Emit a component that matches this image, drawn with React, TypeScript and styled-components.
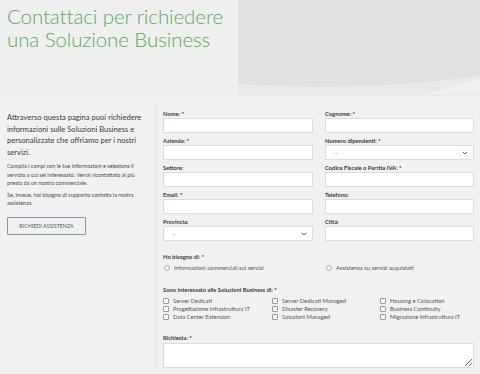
import styled, { createGlobalStyle } from "styled-components";
import { ChevronDown } from "lucide-react";

const GlobalStyle = createGlobalStyle`
  body {
    margin: 0;
    background: #f1f1f1;
    font-family: Lato, "Open Sans", sans-serif;
    color: #333;
  }
`;

const services = [
  "Server Dedicati",
  "Server Dedicati Managed",
  "Housing e Colocation",
  "Progettazione Infrastruttura IT",
  "Disaster Recovery",
  "Business Continuity",
  "Data Center Extension",
  "Soluzioni Managed",
  "Migrazione Infrastruttura IT",
];

const App = () => {
  return (
    <Page>
      <GlobalStyle />
      <Header>
        <HeaderTitleBox>
          <Title>
            Contattaci per richiedere
            <br />
            una Soluzione Business
          </Title>
        </HeaderTitleBox>
        <HeaderBanner>
          <svg width="100%" height="100%" viewBox="0 0 242 95" preserveAspectRatio="none">
            <path d="M0 84 Q120 92 242 76 L242 95 L0 95 Z" fill="#e9e9e9" />
            <path d="M185 95 Q212 87 242 79 L242 95 Z" fill="#f0f0f0" />
          </svg>
        </HeaderBanner>
      </Header>

      <Main>
        <Aside>
          <Intro>
            Attraverso questa pagina puoi richiedere informazioni sulle
            Soluzioni Business e personalizzate che offriamo per i nostri
            servizi.
          </Intro>
          <Note>
            Compila i campi con le tue informazioni e seleziona il servizio a
            cui sei interessato. Verrai ricontattato al più presto da un nostro
            commerciale.
          </Note>
          <Note>
            Se, invece, hai bisogno di supporto contatta la nostra assistenza.
          </Note>
          <OutlineButton>RICHIEDI ASSISTENZA</OutlineButton>
        </Aside>

        <FormPanel>
          <FieldGrid>
            <Field>
              <Label>Nome: *</Label>
              <Input />
            </Field>
            <Field>
              <Label>Cognome: *</Label>
              <Input />
            </Field>
            <Field>
              <Label>Azienda: *</Label>
              <Input />
            </Field>
            <Field>
              <Label>Numero dipendenti: *</Label>
              <SelectBox>
                <span>-</span>
                <ChevronDown size={8} strokeWidth={2.5} />
              </SelectBox>
            </Field>
            <Field>
              <Label>Settore:</Label>
              <Input />
            </Field>
            <Field>
              <Label>Codice Fiscale o Partita IVA: *</Label>
              <Input />
            </Field>
            <Field>
              <Label>Email: *</Label>
              <Input />
            </Field>
            <Field>
              <Label>Telefono:</Label>
              <Input />
            </Field>
            <Field>
              <Label>Provincia:</Label>
              <SelectBox>
                <span>-</span>
                <ChevronDown size={8} strokeWidth={2.5} />
              </SelectBox>
            </Field>
            <Field>
              <Label>Città:</Label>
              <Input />
            </Field>
          </FieldGrid>

          <Section $top={8}>
            <Label>Ho bisogno di: *</Label>
            <RadioRow>
              <Option>
                <Radio />
                Informazioni commerciali sui servizi
              </Option>
              <Option>
                <Radio />
                Assistenza su servizi acquistati
              </Option>
            </RadioRow>
          </Section>

          <Section $top={13}>
            <Label>Sono interessato alle Soluzioni Business di: *</Label>
            <CheckGrid>
              {services.map((s) => (
                <Option key={s}>
                  <Check />
                  {s}
                </Option>
              ))}
            </CheckGrid>
          </Section>

          <Section $top={12}>
            <Label>Richiesta: *</Label>
            <TextArea />
          </Section>
        </FormPanel>
      </Main>
    </Page>
  );
};

export default App;

const Page = styled.div`
  width: 480px;
  height: 374px;
  overflow: hidden;
`;

const Header = styled.header`
  display: flex;
  height: 95px;
  border-bottom: 1px solid #e9e9e9;
`;

const HeaderTitleBox = styled.div`
  width: 238px;
  background: #efefef;
  padding: 5px 0 0 7px;
  box-sizing: border-box;
`;

const Title = styled.h1`
  margin: 0;
  font-family: Lato, sans-serif;
  font-weight: 300;
  font-size: 20.5px;
  line-height: 22.5px;
  color: #5aab5a;
  letter-spacing: -0.1px;
`;

const HeaderBanner = styled.div`
  flex: 1;
  background: #e0e0e0;
  display: flex;
`;

const Main = styled.div`
  display: flex;
`;

const Aside = styled.aside`
  width: 156px;
  box-sizing: border-box;
  padding: 16px 8px 0 7px;
`;

const Intro = styled.p`
  margin: 0 0 4px;
  font-size: 7.6px;
  line-height: 11.5px;
  color: #3a3a3a;
`;

const Note = styled.p`
  margin: 0 0 3px;
  font-size: 5.5px;
  line-height: 8.5px;
  color: #4a4a4a;
`;

const OutlineButton = styled.button`
  margin-top: 6px;
  width: 79px;
  height: 18px;
  padding: 0;
  background: transparent;
  border: 1px solid #7f9aa6;
  border-radius: 1px;
  font-family: Lato, sans-serif;
  font-size: 5.3px;
  color: #4a5a66;
`;

const FormPanel = styled.section`
  flex: 1;
  margin-top: 8px;
  padding: 5px 6px 0 7px;
  border-left: 1px solid #e3e3e3;
`;

const FieldGrid = styled.div`
  display: grid;
  grid-template-columns: 150px 149px;
  column-gap: 12px;
`;

const Field = styled.div`
  display: flex;
  flex-direction: column;
  margin-bottom: 3px;
`;

const Label = styled.label`
  display: block;
  font-size: 5.8px;
  line-height: 9px;
  font-weight: 700;
  color: #3a3a3a;
`;

const Input = styled.input`
  box-sizing: border-box;
  height: 15px;
  width: 100%;
  border: 1px solid #dcdcdc;
  background: #fff;
  padding: 0 4px;
  margin: 0;
  outline: none;
`;

const SelectBox = styled.div`
  box-sizing: border-box;
  height: 15px;
  border: 1px solid #dcdcdc;
  background: #fff;
  display: flex;
  align-items: center;
  justify-content: space-between;
  padding: 0 4px 0 9px;
  font-size: 6px;
  color: #555;
  svg {
    color: #444;
  }
`;

const Section = styled.div<{ $top: number }>`
  margin-top: ${(p) => p.$top}px;
`;

const RadioRow = styled.div`
  display: grid;
  grid-template-columns: 162px 1fr;
  margin-top: 3px;
`;

const CheckGrid = styled.div`
  display: grid;
  grid-template-columns: 109px 108px 1fr;
  margin-top: 3px;
`;

const Option = styled.div`
  display: flex;
  align-items: center;
  gap: 4px;
  font-size: 5.8px;
  line-height: 8px;
  color: #555;
  white-space: nowrap;
`;

const Radio = styled.span`
  width: 4px;
  height: 4px;
  border: 1px solid #aaa;
  border-radius: 50%;
  margin-left: 1px;
  background: #fff;
`;

const Check = styled.span`
  width: 4px;
  height: 4px;
  border: 1px solid #999;
  border-radius: 1px;
  background: #fff;
`;

const TextArea = styled.textarea`
  display: block;
  box-sizing: border-box;
  width: 100%;
  height: 25px;
  margin-top: 1px;
  border: 1px solid #dcdcdc;
  background: #fff;
  resize: vertical;
`;
